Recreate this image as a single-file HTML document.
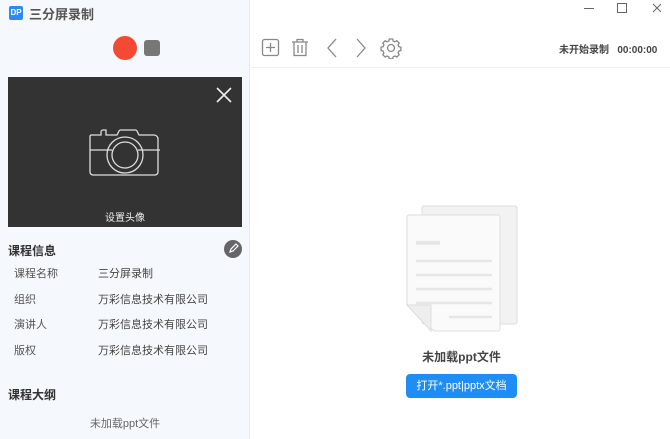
<!DOCTYPE html>
<html><head><meta charset="utf-8"><style>
*{margin:0;padding:0;box-sizing:border-box}
body{width:670px;height:439px;overflow:hidden;background:#fff;font-family:"Liberation Sans","Noto Sans CJK SC",sans-serif;position:relative;font-size:11px;color:#333}
.left{position:absolute;left:0;top:0;width:250px;height:439px;background:#f5f8fc;border-right:1px solid #e6e9ee}
.abs{position:absolute}
</style></head><body>
<div class="left">
 <div class="abs" style="left:9px;top:6px;width:14px;height:14px;background:#2c8af0;border-radius:2px;color:#fff;font-size:8px;font-weight:bold;line-height:14px;text-align:center">DP</div>
 <div class="abs" style="left:29px;top:4px;font-size:13px;color:#555;font-weight:bold">三分屏录制</div>
 <div class="abs" style="left:113px;top:36px;width:24px;height:24px;border-radius:50%;background:#f44a33"></div>
 <div class="abs" style="left:144px;top:40px;width:16px;height:16px;border-radius:3px;background:#777"></div>
 <div class="abs" style="left:8px;top:77px;width:234px;height:150px;background:#333">
  <svg class="abs" style="left:208px;top:10px" width="16" height="16"><path d="M1 1L15 15M15 1L1 15" stroke="#eee" stroke-width="1.6"/></svg>
  <svg class="abs" style="left:81px;top:48px" width="72" height="52" fill="none" stroke="#ddd" stroke-width="1.3">
   <path d="M2 10h10v-3a2 2 0 012-2h3v5h11l2-4a2 2 0 012-1h14a2 2 0 012 1l2 4h15a4 4 0 014 4v33a3 3 0 01-3 3H4a3 3 0 01-3-3V12a2 2 0 011-2z"/>
   <path d="M1 25h22M49 25h22"/>
   <circle cx="36" cy="30" r="18"/><circle cx="36" cy="30" r="13"/>
  </svg>
  <div class="abs" style="left:0;width:234px;top:132px;text-align:center;color:#eee;font-size:10px">设置头像</div>
 </div>
 <div class="abs" style="left:8px;top:242px;font-size:12px;font-weight:bold;color:#333">课程信息</div>
 <div class="abs" style="left:224px;top:240px;width:18px;height:18px;border-radius:50%;background:#666">
  <svg width="18" height="18"><path d="M6 12l1-3 5-5 2 2-5 5z" fill="none" stroke="#fff" stroke-width="1.2"/></svg></div>
 <div class="abs" style="left:14px;top:262px;line-height:25.5px;color:#555">课程名称<br>组织<br>演讲人<br>版权</div>
 <div class="abs" style="left:98px;top:262px;line-height:25.5px;color:#444">三分屏录制<br>万彩信息技术有限公司<br>万彩信息技术有限公司<br>万彩信息技术有限公司</div>
 <div class="abs" style="left:8px;top:386px;font-size:12px;font-weight:bold;color:#333">课程大纲</div>
 <div class="abs" style="left:0;width:250px;top:415px;text-align:center;color:#666">未加载ppt文件</div>
</div>
<svg class="abs" style="left:578px;top:2px" width="90" height="12" stroke="#666" fill="none" stroke-width="1"><path d="M6 6.5h10"/><rect x="39.5" y="1.5" width="9" height="9"/><path d="M75 2l8 8M83 2l-8 8"/></svg>
<svg class="abs" style="left:261px;top:37px" width="150" height="22" fill="none" stroke="#888" stroke-width="1.3">
 <rect x="1.5" y="2.5" width="16" height="16" rx="2"/><path d="M9.5 6v9M5 10.5h9"/>
 <path d="M31 5h16M36 5V2.5h6V5M33 5v13.5h12V5M37 8v8M41 8v8"/>
 <path d="M75 2l-8 9 8 9"/><path d="M96 2l8 9-8 9"/>
 <circle cx="130" cy="11" r="3.5"/>
 <path d="M128.3 2h3.4l.5 2 1.8.8 1.8-1.1 2.4 2.4-1.1 1.8.8 1.8 2 .5v3.4l-2 .5-.8 1.8 1.1 1.8-2.4 2.4-1.8-1.1-1.8.8-.5 2h-3.4l-.5-2-1.8-.8-1.8 1.1-2.4-2.4 1.1-1.8-.8-1.8-2-.5v-3.4l2-.5.8-1.8-1.1-1.8 2.4-2.4 1.8 1.1 1.8-.8z"/>
</svg>
<div class="abs" style="left:559px;top:41px;font-size:10px;color:#444;font-weight:bold">未开始录制 &nbsp; 00:00:00</div>
<div class="abs" style="left:251px;top:67px;width:419px;height:1px;background:#eef0f3"></div>
<svg class="abs" style="left:404px;top:205px" width="115" height="140">
 <rect x="18" y="1" width="95" height="118" rx="2" fill="#f2f2f2" stroke="#ddd"/>
 <path d="M3 12a2 2 0 012-2h89a2 2 0 012 2v112a2 2 0 01-2 2H30L3 100z" fill="#fafafa" stroke="#ddd"/>
 <path d="M3 100h24v26z" fill="#eee" stroke="#ddd"/>
 <path d="M12 38h24" stroke="#e6e6e6" stroke-width="4"/>
 <path d="M12 56h76M12 70h76M12 84h76M12 98h76M45 112h43" stroke="#e6e6e6" stroke-width="2.5"/>
</svg>
<div class="abs" style="left:404px;top:348px;width:115px;text-align:center;font-size:12px;font-weight:bold;color:#444">未加载ppt文件</div>
<div class="abs" style="left:406px;top:374px;width:111px;height:24px;background:#1e8ef5;border-radius:4px;color:#fff;text-align:center;line-height:24px;font-size:11px">打开*.ppt|pptx文档</div>
</body></html>
